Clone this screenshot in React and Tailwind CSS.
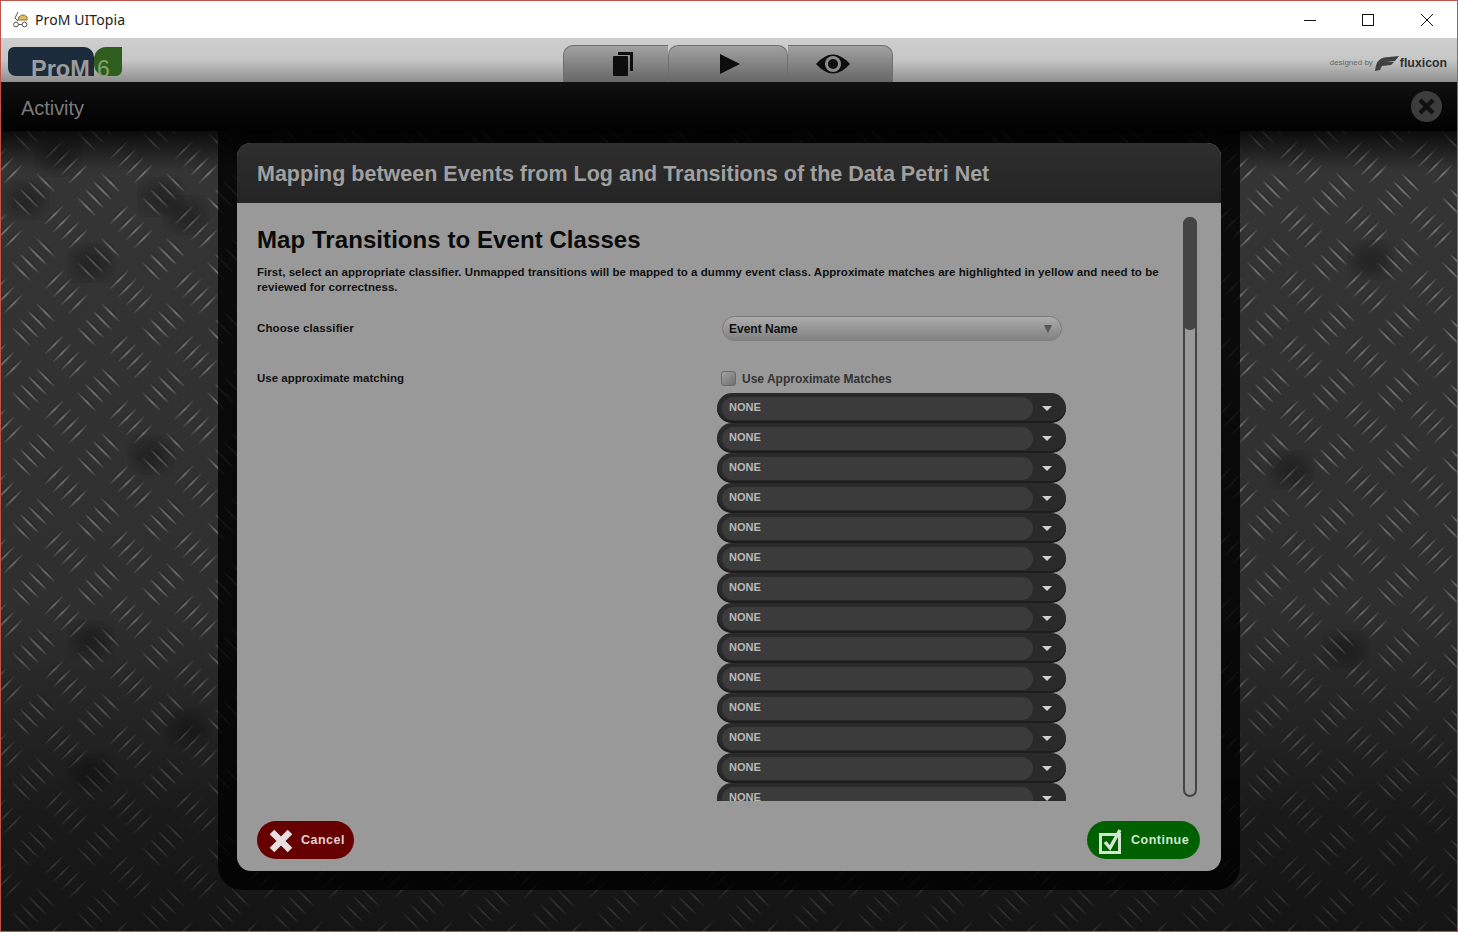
import React from 'react'

const rows = Array.from({ length: 14 })

// one tapered stripe of the tread plate, drawn along the / direction
const stripe = 'M-9 9 Q-1 -1 9 -9 Q1 1 -9 9 Z'

function Cluster({ x, y, flip }) {
  const offsets = [-12, -4, 4, 12]
  return (
    <g transform={`translate(${x} ${y}) ${flip ? 'scale(-1 1)' : ''}`}>
      {offsets.map((o) => (
        <g key={o} transform={`translate(${o} ${o})`}>
          <path d={stripe} fill="#000" fillOpacity="0.35" transform="translate(-1 -1)" />
          <path d={stripe} fill="#c4c4c4" fillOpacity="0.75" stroke="#9a9a9a" strokeOpacity="0.3" strokeWidth="0.4" />
        </g>
      ))}
    </g>
  )
}

function TreadPlate() {
  const spots = [[90, 263], [185, 215], [160, 197], [25, 200], [57, 157], [90, 773], [187, 728], [1370, 260], [1290, 470], [90, 640], [150, 455], [1345, 650]]
  return (
    <svg className="absolute inset-0 h-full w-full" aria-hidden="true">
      <defs>
        <pattern id="plate" width="65" height="65" x="32.5" y="-1.5" patternUnits="userSpaceOnUse">
          <Cluster x={32.5} y={32.5} />
          <Cluster x={0} y={0} flip />
          <Cluster x={65} y={0} flip />
          <Cluster x={0} y={65} flip />
          <Cluster x={65} y={65} flip />
        </pattern>
        <linearGradient id="plateShade" x1="0" y1="0" x2="0" y2="1">
          <stop offset="0" stopColor="#000" stopOpacity="0.8" />
          <stop offset="0.05" stopColor="#000" stopOpacity="0.1" />
          <stop offset="0.6" stopColor="#000" stopOpacity="0.2" />
          <stop offset="0.85" stopColor="#000" stopOpacity="0.55" />
          <stop offset="1" stopColor="#000" stopOpacity="0.65" />
        </linearGradient>
        <filter id="soft"><feGaussianBlur stdDeviation="8" /></filter>
      </defs>
      <rect width="100%" height="100%" fill="#3a3a3a" />
      <rect width="100%" height="100%" fill="url(#plate)" />
      {spots.map(([x, y]) => (
        <ellipse key={x + '-' + y} cx={x} cy={y - 131} rx="20" ry="16" fill="#000" fillOpacity="0.3" filter="url(#soft)" />
      ))}
      <rect width="100%" height="100%" fill="url(#plateShade)" />
    </svg>
  )
}

function NoneCombo() {
  return (
    <div className="flex h-[30px] w-[349px] shrink-0 items-center rounded-full bg-[#2a2a2a] pl-[5px] shadow-[inset_0_-2px_0_#1c1c1c]">
      <div className="flex h-[23px] w-[311px] items-center rounded-full bg-[#3b3b3b] pb-[1px] pl-[7px] text-[11px] font-bold text-[#b9b9b9]">
        NONE
      </div>
      <div className="ml-[9px] h-0 w-0 border-x-[5px] border-t-[5px] border-x-transparent border-t-[#d0d0d0]" />
    </div>
  )
}

export default function App() {
  return (
    <div className="flex h-screen flex-col overflow-hidden border border-[#c0524c] bg-black font-['Liberation_Sans',Arial,sans-serif]">
      {/* Title bar */}
      <div className="flex h-[37px] shrink-0 items-center bg-white pl-[11px]">
        <svg width="17" height="17" viewBox="0 0 17 17" fill="none" stroke="#555" strokeWidth="1">
          <path d="M6 1 L3 7 L6 10" />
          <path d="M6 9 A5 5 0 0 1 15 6 L15 9 Z" fill="#e0bd62" stroke="#8a6d2c" />
          <circle cx="4" cy="13.5" r="2.4" />
          <circle cx="12.5" cy="13.5" r="2.4" />
          <path d="M6.4 13.5 H10.1" />
        </svg>
        <span className="ml-[6px] font-['Noto_Sans',sans-serif] text-[14px] tracking-[0.08px] text-[#222]">ProM UITopia</span>
        <div className="ml-auto flex items-center">
          <svg className="mr-[46px]" width="12" height="12" viewBox="0 0 12 12" stroke="#111" fill="none"><path d="M0 6.5 H12" /></svg>
          <svg className="mr-[47px]" width="12" height="12" viewBox="0 0 12 12" stroke="#111" fill="none"><rect x="0.5" y="0.5" width="11" height="11" /></svg>
          <svg className="mr-[24px]" width="12" height="12" viewBox="0 0 12 12" stroke="#111" fill="none"><path d="M0 0 L12 12 M12 0 L0 12" /></svg>
        </div>
      </div>

      {/* Toolbar */}
      <div className="grid h-[44px] shrink-0 grid-cols-[1fr_auto_1fr] bg-gradient-to-b from-[#cfcfcf] via-[#c6c6c6] to-[#8f8f8f]">
        <div className="pl-[7px] pt-[9px]">
          <div className="flex h-[29px] w-[114px] overflow-hidden">
            <div className="h-full w-[86px] rounded-bl-[8px] rounded-tl-[6px] rounded-tr-[10px] bg-[#1b2b3c] pl-[23px] pt-[8px] text-[23.5px] font-bold leading-[28px] text-[#9c9c9c]">
              ProM
            </div>
            <div className="h-full w-[28px] rounded-bl-[12px] rounded-br-[6px] rounded-tl-[12px] bg-[#2f5d1e] pl-[3px] pt-[8px] text-[23px] leading-[28px] text-[#7fa16f]">
              6
            </div>
          </div>
        </div>
        <div className="mr-[2px] flex items-end pt-[7px]">
          <div className="flex h-full w-[105px] items-center justify-center rounded-tl-[10px] border-l border-t border-[#6e6e6e] bg-gradient-to-b from-[#a2a2a2] to-[#666] pl-[14px]">
            <svg width="22" height="24" viewBox="0 0 22 24" fill="#0d0d0d"><path d="M6 0 H21 V19 H18 V3 H6 Z" /><rect x="1" y="4" width="15" height="20" rx="1" /></svg>
          </div>
          <div className="flex h-full w-[120px] items-center justify-center rounded-t-[10px] border-x border-t border-[#6e6e6e] bg-gradient-to-b from-[#a2a2a2] to-[#666] pl-[3px]">
            <svg width="22" height="20" viewBox="0 0 22 20" fill="#0d0d0d"><path d="M1 0 L21 10 L1 20 Z" /></svg>
          </div>
          <div className="flex h-full w-[105px] items-center justify-center rounded-tr-[10px] border-r border-t border-[#6e6e6e] bg-gradient-to-b from-[#a2a2a2] to-[#666] pr-[14px]">
            <svg width="36" height="22" viewBox="0 0 36 22"><path d="M1 11 Q18 -8 35 11 Q18 30 1 11 Z" fill="#0d0d0d" /><circle cx="18" cy="11" r="8" fill="#8a8a8a" /><circle cx="18" cy="11" r="5" fill="#0d0d0d" /></svg>
          </div>
        </div>
        <div className="flex items-center justify-end pr-[10px] pt-[6px]">
          <span className="text-[8px] text-[#666]">designed by</span>
          <svg className="ml-[2px] mr-[1px]" width="24" height="15" viewBox="0 0 24 15" fill="#404040"><path d="M0 15 Q1 3 9 1.5 L24 0 L20 5 L11 6 L19 6 L16 9 L7 10 L5 14 Z" /></svg>
          <span className="text-[12.3px] font-bold text-[#2e2e2e]">fluxicon</span>
        </div>
      </div>

      {/* Activity bar */}
      <div className="flex h-[49px] shrink-0 items-center justify-between bg-gradient-to-b from-[#111] to-[#020202] pl-[20px] pr-[15px]">
        <span className="pt-[2px] text-[20px] tracking-[-0.05px] text-[#7b7b7b]">Activity</span>
        <div className="flex h-[31px] w-[31px] items-center justify-center rounded-full bg-[#3c3c3c]">
          <svg width="17" height="17" viewBox="0 0 17 17" stroke="#111" strokeWidth="4.5"><path d="M2 2 L15 15 M15 2 L2 15" /></svg>
        </div>
      </div>

      {/* Work area */}
      <div className="relative flex-1">
        <TreadPlate />
        <div className="relative ml-[217px] h-[759px] w-[1022px] rounded-b-[24px] bg-black/80 px-[19px] pb-[19px] pt-[12px]">
          <div className="flex h-full flex-col overflow-hidden rounded-[14px] bg-[#999999]">
            <div className="flex h-[60px] shrink-0 items-center bg-gradient-to-b from-[#2e2e2e] to-[#242424] pl-[20px] pt-[2px] text-[21.5px] font-bold text-[#a0a0a0]">
              Mapping between Events from Log and Transitions of the Data Petri Net
            </div>

            <div className="flex h-[598px] shrink-0 overflow-hidden pl-[20px] pt-[14px]">
              <div className="w-[926px] shrink-0">
                <h1 className="text-[24px] font-bold leading-[46px] tracking-[0.07px] text-[#0a0a0a]">Map Transitions to Event Classes</h1>
                <p className="mt-[2px] w-[910px] text-[11.5px] font-bold leading-[15px] tracking-[0.05px] text-[#111]">
                  First, select an appropriate classifier. Unmapped transitions will be mapped to a dummy event class. Approximate matches are highlighted in yellow and need to be reviewed for correctness.
                </p>
                <div className="mt-[21px] flex h-[25px] items-center">
                  <span className="w-[465px] text-[11.5px] font-bold tracking-[0.1px] text-[#111]">Choose classifier</span>
                  <div className="flex h-[25px] w-[340px] items-center justify-between rounded-full border border-[#7c7c7c] bg-gradient-to-b from-[#acacac] to-[#828282] pl-[6px] pr-[9px] text-[12px] font-bold text-[#111]">
                    Event Name
                    <div className="h-0 w-0 border-x-[4px] border-t-[8px] border-x-transparent border-t-[#555]" />
                  </div>
                </div>
                <div className="mt-[25px] flex h-[25px] items-center">
                  <span className="w-[464px] text-[11.5px] font-bold text-[#111]">Use approximate matching</span>
                  <div className="h-[15px] w-[15px] rounded-[3px] border border-[#6a6a6a] bg-gradient-to-br from-[#a4a4a4] to-[#6e6e6e]" />
                  <span className="ml-[6px] text-[12px] font-bold text-[#333]">Use Approximate Matches</span>
                </div>
                <div className="ml-[460px] mt-[2px] flex flex-col">
                  {rows.map((_, i) => (
                    <NoneCombo key={i} />
                  ))}
                </div>
              </div>
              <div className="relative h-[580px] w-[14px] shrink-0 rounded-full border-2 border-[#444]">
                <div className="absolute inset-x-[-2px] top-[-2px] h-[113px] rounded-full bg-[#444]" />
              </div>
            </div>

            <div className="flex flex-1 items-start justify-between pl-[20px] pr-[21px] pt-[20px]">
              <button className="flex h-[38px] w-[97px] items-center rounded-full bg-[#660000] pl-[12px] pt-[1px] text-[12.5px] font-bold tracking-[0.5px] text-[#e6d0d0]">
                <svg width="24" height="24" viewBox="0 0 24 24" stroke="#e6e0e0" strokeWidth="6.5"><path d="M3 3 L21 21 M21 3 L3 21" /></svg>
                <span className="ml-[8px]">Cancel</span>
              </button>
              <button className="flex h-[38px] w-[113px] items-center rounded-full bg-[#006000] pl-[12px] pt-[1px] text-[12.5px] font-bold tracking-[0.5px] text-[#cfe8cf]">
                <svg width="24" height="26" viewBox="0 0 24 26" fill="none" stroke="#cfe8cf"><rect x="1.5" y="6.5" width="19" height="18" strokeWidth="3" /><path d="M6 14 L11 20 L21 2" strokeWidth="3.5" /></svg>
                <span className="ml-[8px]">Continue</span>
              </button>
            </div>
          </div>
        </div>
      </div>
    </div>
  )
}
